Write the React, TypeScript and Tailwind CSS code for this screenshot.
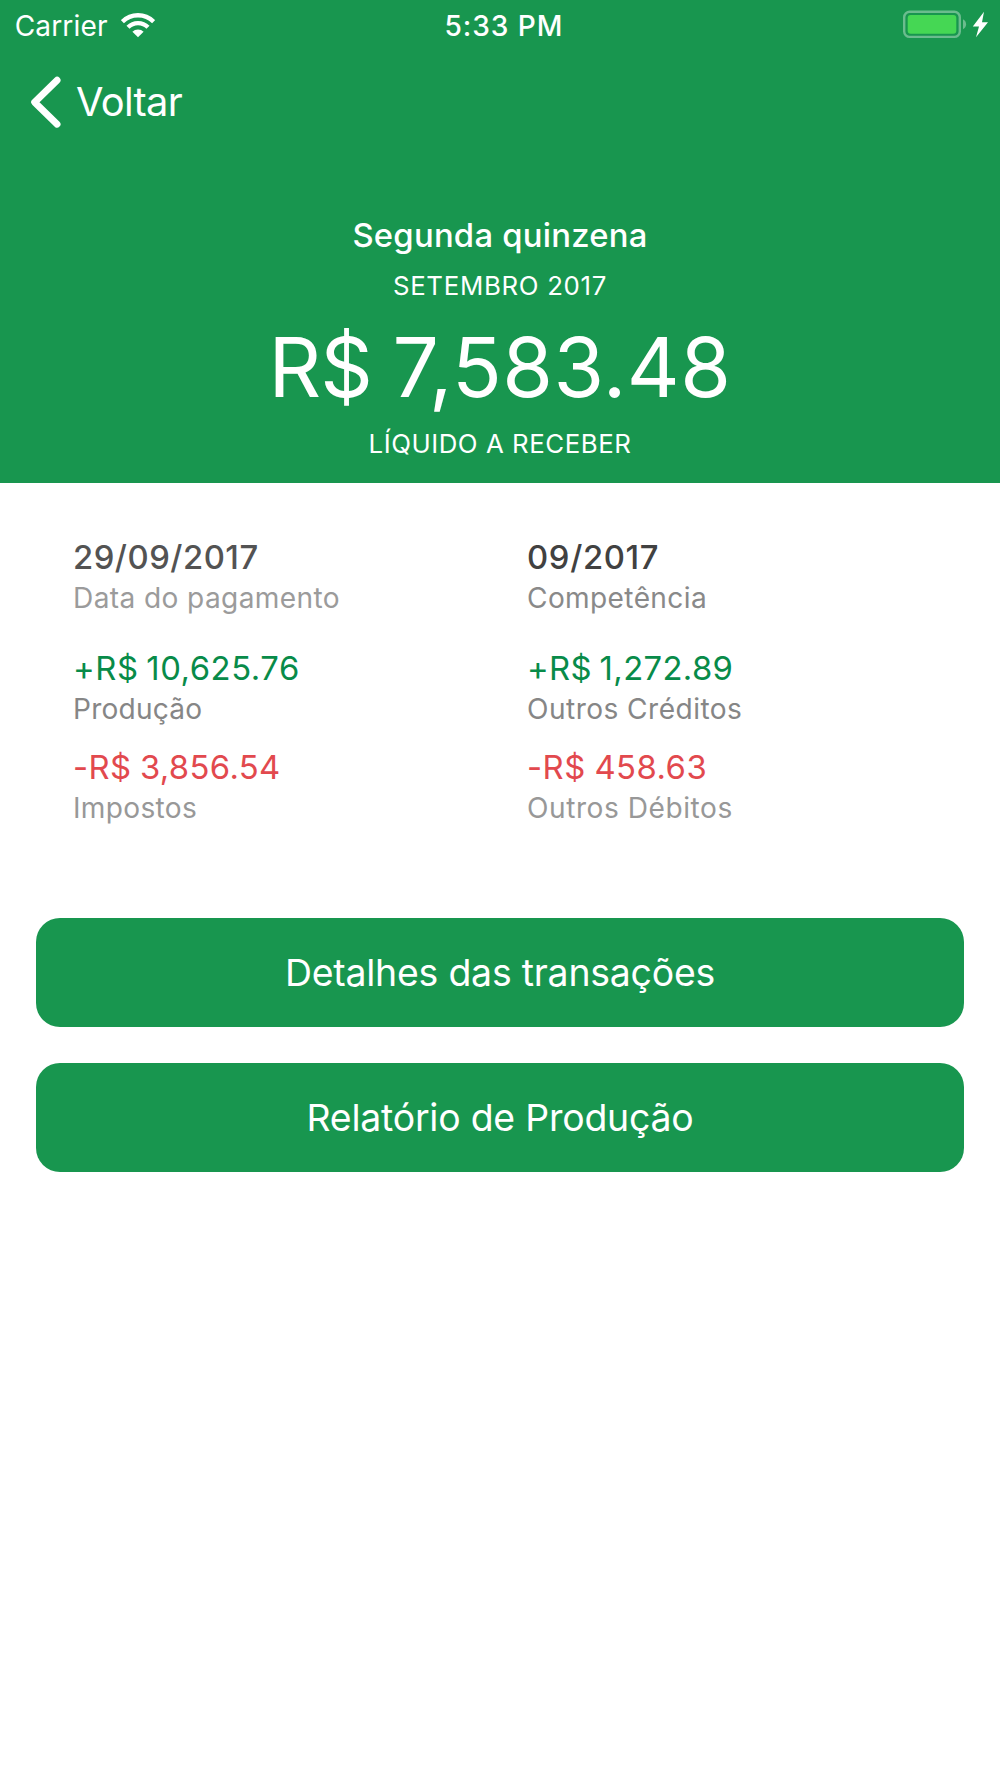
type Entry = {
  amount: string;
  caption: string;
  value: string;
  label: string;
};

const rows: { gap: string; entries: Entry[] }[] = [
  {
    gap: "",
    entries: [
      { amount: "29/09/2017", caption: "Data do pagamento", value: "font-medium tracking-[0.5px] text-[#535353]", label: "tracking-[0.38px] text-[#9b9b9b]" },
      { amount: "09/2017", caption: "Competência", value: "font-medium tracking-[0.65px] text-[#414141]", label: "tracking-[0.36px] text-[#898989]" },
    ],
  },
  {
    gap: "mt-[29px]",
    entries: [
      { amount: "+R$ 10,625.76", caption: "Produção", value: "tracking-[0.55px] [word-spacing:-2px] text-[#088b49]", label: "tracking-[0.2px] text-[#868686]" },
      { amount: "+R$ 1,272.89", caption: "Outros Créditos", value: "tracking-[0.38px] [word-spacing:-2px] text-[#088b49]", label: "tracking-[0.45px] text-[#868686]" },
    ],
  },
  {
    gap: "mt-[17px]",
    entries: [
      { amount: "-R$ 3,856.54", caption: "Impostos", value: "tracking-[0.36px] [word-spacing:-1px] text-[#e2494e]", label: "tracking-[0.31px] text-[#989898]" },
      { amount: "-R$ 458.63", caption: "Outros Débitos", value: "tracking-[0.48px] [word-spacing:-1px] text-[#e2494e]", label: "tracking-[0.54px] text-[#989898]" },
    ],
  },
];

function WifiIcon() {
  return (
    <svg className="mt-[-2px] ml-[13.3px] h-[25px] w-[34px]" viewBox="0 0 34 25" fill="none" stroke="#fff">
      <path d="M1.4 8.7a22.1 22.1 0 0 1 31.2 0" strokeWidth="4.3" />
      <path d="M7 14.3a14.15 14.15 0 0 1 20 0" strokeWidth="4.3" />
      <path d="M11.4 18.7a8 8 0 0 1 11.2 0L17 24.3z" fill="#fff" stroke="none" />
    </svg>
  );
}

function BatteryIcon() {
  return (
    <svg className="mt-[-4px] h-[32px] w-[88px]" viewBox="0 0 88 32" fill="none">
      <rect x="4.2" y="3.7" width="55.6" height="25.2" rx="5.5" stroke="#fff" strokeOpacity="0.36" strokeWidth="2.4" />
      <rect x="7.7" y="6.9" width="48.6" height="18.8" rx="3" fill="#45d754" />
      <path d="M63 11.3a5.6 5.6 0 0 1 0 10z" fill="#fff" fillOpacity="0.36" />
      <path d="M84 3.8 72.8 18.6h6.2L76 29.2 88 14.2h-6z" fill="#fff" />
    </svg>
  );
}

function StatusBar() {
  return (
    <div className="grid h-[52px] grid-cols-[1fr_auto_1fr] items-center pr-3 pl-[14.7px] text-[28.1px] leading-[52px]">
      <div className="flex items-center">
        <span className="tracking-[0.12px]">Carrier</span>
        <WifiIcon />
      </div>
      <span className="ml-[5px] font-medium tracking-[0.95px]">5:33 PM</span>
      <div className="flex justify-end">
        <BatteryIcon />
      </div>
    </div>
  );
}

function ActionButton({ children }: { children: string }) {
  return (
    <button className="h-[108.6px] w-full rounded-[24px] bg-[#18964f] pt-[2px] text-[37.4px] leading-[106.6px] tracking-[-0.21px] text-white">
      {children}
    </button>
  );
}

export default function App() {
  return (
    <div className="min-h-[1778px] w-[1000px] bg-white font-['Inter',sans-serif]">
      <header className="h-[483px] bg-[#18964f] text-white">
        <StatusBar />
        <nav className="flex h-[99px] items-center pl-[31px]">
          <svg className="h-[52px] w-[30px]" viewBox="0 0 30 52" fill="none" stroke="#fff" strokeWidth="6.8" strokeLinecap="round" strokeLinejoin="round">
            <path d="M26.1 4.2 3.6 26.2l22.5 22" />
          </svg>
          <span className="ml-[15px] text-[39.8px] leading-[99px] tracking-[-0.69px]">Voltar</span>
        </nav>
        <div className="flex flex-col items-center pt-[60px]">
          <h1 className="text-[32.8px] leading-[48px] font-medium tracking-[0.24px]">Segunda quinzena</h1>
          <p className="text-[25.8px] leading-[53px] tracking-[0.7px]">SETEMBRO 2017</p>
          <p className="pt-px text-[82px] leading-[109px] tracking-[0.45px] [word-spacing:-3px]">
            <span className="tracking-[-1px]">R$</span> 7,583.48
          </p>
          <p className="text-[25.8px] leading-[43px] tracking-[0.56px]">LÍQUIDO A RECEBER</p>
        </div>
      </header>
      <main>
        <section className="pt-[54px] pl-[73px]">
          {rows.map((row) => (
            <div key={row.entries[0].caption} className={`grid grid-cols-[454px_1fr] ${row.gap}`}>
              {row.entries.map((entry) => (
                <div key={entry.caption}>
                  <p className={`text-[32.8px] leading-[40px] ${entry.value}`}>{entry.amount}</p>
                  <p className={`pt-px text-[28.1px] leading-[41px] ${entry.label}`}>{entry.caption}</p>
                </div>
              ))}
            </div>
          ))}
        </section>
        <section className="mt-[89px] flex flex-col gap-[36.4px] px-[36.3px]">
          <ActionButton>Detalhes das transações</ActionButton>
          <ActionButton>Relatório de Produção</ActionButton>
        </section>
      </main>
    </div>
  );
}
